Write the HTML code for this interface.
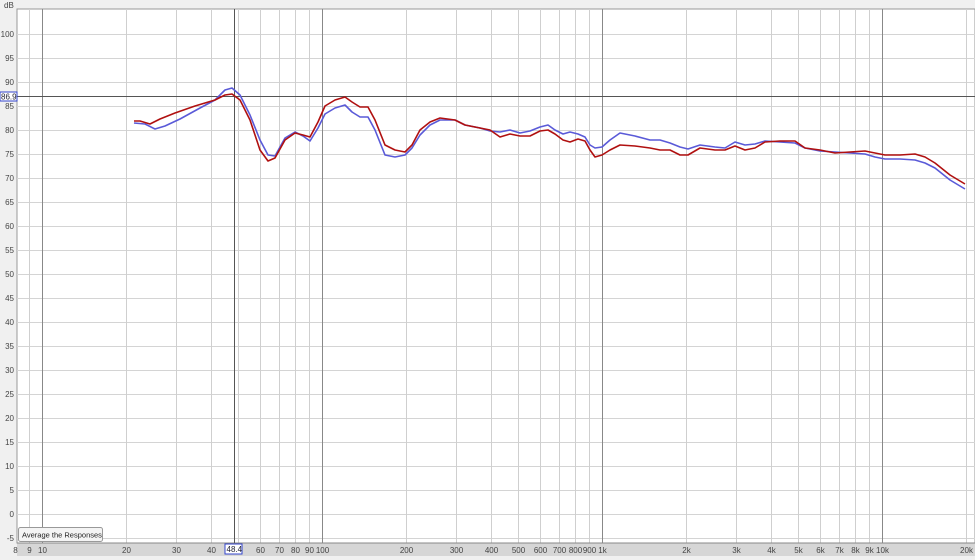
<!DOCTYPE html>
<html><head><meta charset="utf-8"><style>
html,body{margin:0;padding:0;background:#f0f0f0;width:975px;height:560px;overflow:hidden;font-family:"Liberation Sans",sans-serif}
svg{display:block}
</style></head><body>
<svg id="s" width="975" height="560" xmlns="http://www.w3.org/2000/svg" font-family="Liberation Sans, sans-serif" font-size="8" fill="#444">
<rect x="0" y="0" width="975" height="560" fill="#f0f0f0"/>
<rect x="17" y="9" width="958" height="534" fill="#fff" stroke="#999" stroke-width="1"/>
<g id="grid"></g>
<rect x="17" y="543" width="958" height="13" fill="#d6d6d6"/>
<line x1="17" y1="543" x2="975" y2="543" fill="none" stroke="#888"/>
<g id="lbl"></g>
<text x="4" y="8" font-size="8">dB</text>
<line x1="0" y1="96.5" x2="975" y2="96.5" stroke="#555" stroke-width="1"/>
<line x1="234.5" y1="9" x2="234.5" y2="543" stroke="#555" stroke-width="1"/>
<rect x="0" y="92" width="17" height="9" fill="#fff" stroke="#3344cc"/>
<text x="1" y="99.5" font-size="8" fill="#223">86.9</text>
<rect x="225" y="544" width="17" height="10" fill="#fff" stroke="#3344cc"/>
<text x="226.5" y="552" font-size="8" fill="#223">48.4</text>
<polyline fill="none" stroke="#5a5ad8" stroke-width="1.6" stroke-linejoin="round" points="134,123 145,124 155,129 165,126 180,119 200,108 215,100 225,90 232,88 240,95 250,115 260,140 268,155 275,156 285,138 295,132 303,136 310,141 318,128 325,114 335,108 345,105 352,112 360,117 368,117 375,130 385,155 395,157 405,155 412,148 420,135 430,125 440,120 455,120 465,125 480,128 490,131 500,132 510,130 520,133 530,131 540,127 548,125 555,130 563,134 570,132 578,134 585,137 590,145 595,148 602,147 610,140 620,133 635,136 650,140 660,140 670,143 680,147 688,149 700,145 715,147 725,148 735,142 745,145 755,144 765,141 780,142 795,143 805,148 820,151 835,152 850,153 865,154 875,157 885,159 900,159 915,160 925,163 935,168 950,180 965,189"/>
<polyline fill="none" stroke="#b01010" stroke-width="1.6" stroke-linejoin="round" points="134,121 140,121 150,124 160,119 175,113 195,106 215,100 225,95 232,94 240,100 250,120 260,150 268,161 275,158 285,140 295,133 303,135 310,137 318,122 325,106 335,100 345,97 352,102 360,107 368,107 375,120 385,145 395,150 405,152 412,145 420,130 430,122 440,118 455,120 465,125 480,128 490,130 500,137 510,134 520,136 530,136 540,131 548,130 555,134 563,140 570,142 578,139 585,141 590,150 595,157 602,155 610,150 620,145 635,146 650,148 660,150 670,150 680,155 688,155 700,148 715,150 725,150 735,146 745,150 755,148 765,142 780,141 795,141 805,148 820,150 835,153 850,152 865,151 875,153 885,155 900,155 915,154 925,157 935,163 950,175 965,184"/>
<rect x="18.5" y="527.5" width="84" height="14" rx="2" fill="#f4f4f4" stroke="#999"/>
<text x="22" y="537.5" font-size="7.5" fill="#222">Average the Responses</text>
</svg>
<script>
var g=document.getElementById('grid'),L=document.getElementById('lbl'),ns='http://www.w3.org/2000/svg';
function el(p,t,a,txt){var e=document.createElementNS(ns,t);for(var k in a)e.setAttribute(k,a[k]);if(txt)e.textContent=txt;p.appendChild(e);}
function X(f){return 42+280*Math.log10(f/10);}
for(var d=100;d>=-5;d-=5){var y=34+(100-d)*4.8;el(g,'line',{x1:17,x2:975,y1:y+.5,y2:y+.5,stroke:'#d4d4d4'});el(L,'text',{x:14,y:y+3,'text-anchor':'end'},String(d));}
var fs=[8,9,10,20,30,40,50,60,70,80,90,100,200,300,400,500,600,700,800,900,1000,2000,3000,4000,5000,6000,7000,8000,9000,10000,20000];
var lab={8:'8',9:'9',10:'10',20:'20',30:'30',40:'40',60:'60',70:'70',80:'80',90:'90',100:'100',200:'200',300:'300',400:'400',500:'500',600:'600',700:'700',800:'800',900:'900',1000:'1k',2000:'2k',3000:'3k',4000:'4k',5000:'5k',6000:'6k',7000:'7k',8000:'8k',9000:'9k',10000:'10k',20000:'20k'};
fs.forEach(function(f){var x=Math.round(X(f))+.5;var major=(f==10||f==100||f==1000||f==10000);if(x>17)el(g,'line',{x1:x,x2:x,y1:9,y2:543,stroke:major?'#888':'#cfcfcf'});if(lab[f])el(L,'text',{x:Math.min(x,968),y:553,'text-anchor':'middle'},lab[f]);});
</script>
</body></html>
